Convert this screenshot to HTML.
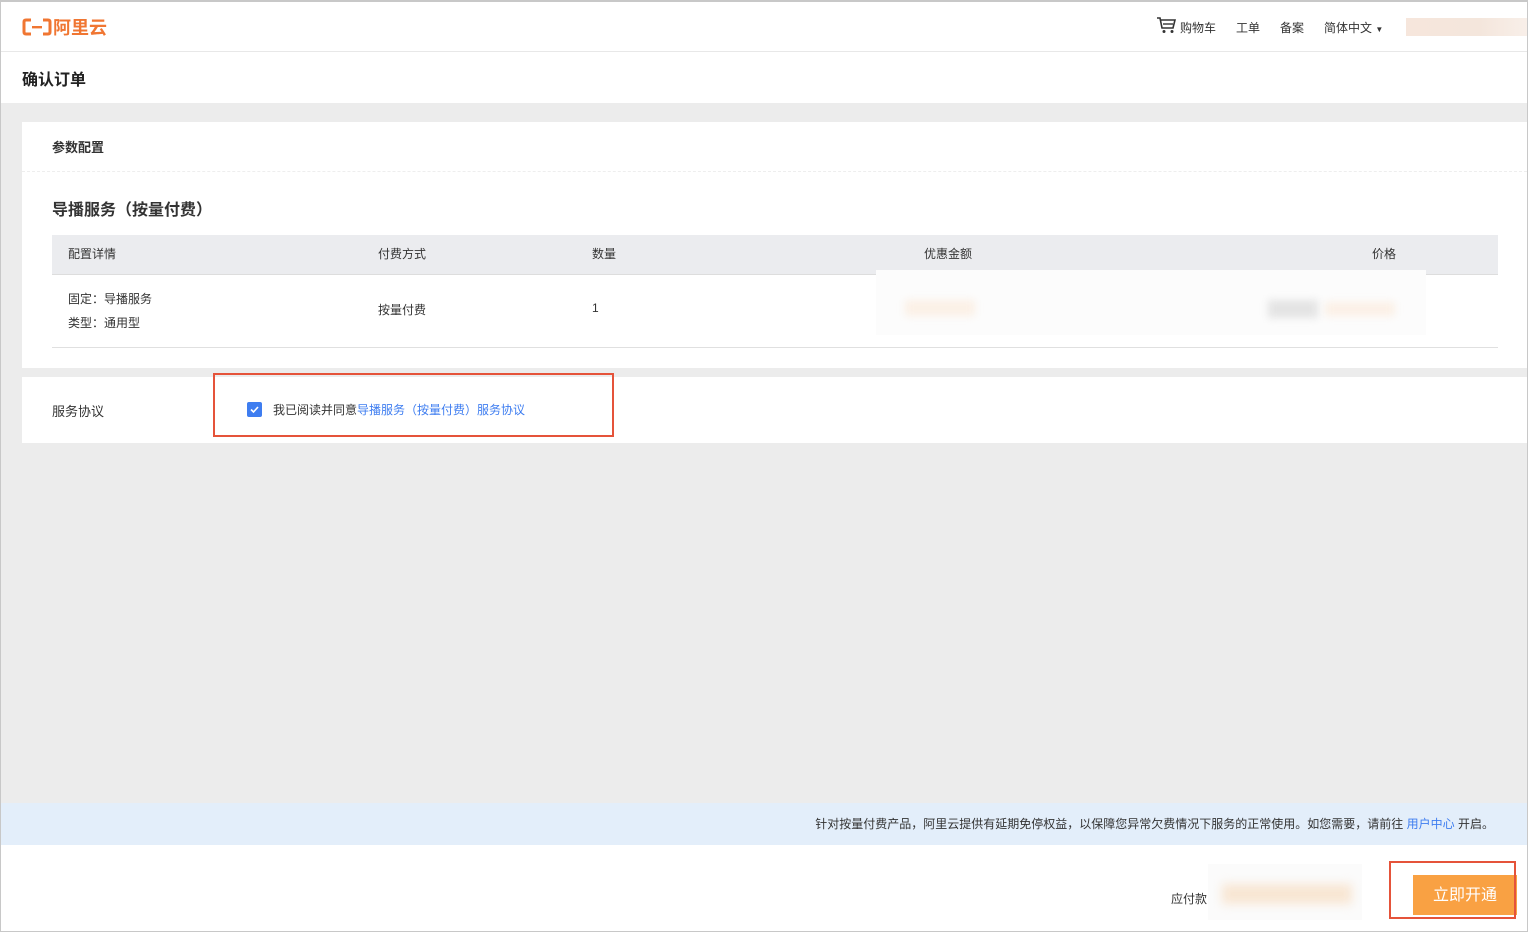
<!DOCTYPE html>
<html><head><meta charset="utf-8"><style>
*{margin:0;padding:0;box-sizing:border-box}
body{width:1528px;height:932px;overflow:hidden;background:#fff;font-family:"Liberation Sans","Noto Sans CJK SC",sans-serif;color:#333;position:relative}
.frame{position:absolute;left:0;top:0;width:1528px;height:932px;border:1px solid #c8c8c8;border-top:2px solid #c8c8c8;pointer-events:none}
.abs{position:absolute}
.top{left:0;top:0;width:1528px;height:52px;border-bottom:1px solid #e8e8e8;background:#fff}
.gray{left:1px;top:103px;width:1526px;height:700px;background:#ececec}
.card{background:#fff}
.t12{font-size:12px}
</style></head><body>
<div class="abs top"></div>
<div class="abs" style="left:22px;top:17px;color:#f07632;font-weight:bold;font-size:18px;line-height:22px">
<svg width="30" height="18" viewBox="0 0 30 18" style="vertical-align:-2px"><path d="M9 2H4Q2 2 2 4V14Q2 16 4 16H9" fill="none" stroke="#f07632" stroke-width="3"/><path d="M21 2H26Q28 2 28 4V14Q28 16 26 16H21" fill="none" stroke="#f07632" stroke-width="3"/><rect x="10" y="8" width="10" height="2.4" fill="#f07632"/></svg><span style="margin-left:1px">阿里云</span></div>
<svg class="abs" style="left:1156px;top:16px" width="20" height="18" viewBox="0 0 20 18"><path d="M1 2H4L6 12H17L19 4H5" fill="none" stroke="#333" stroke-width="1.6"/><path d="M7 8H17" stroke="#333" stroke-width="1.4"/><circle cx="8" cy="15.5" r="1.5" fill="#333"/><circle cx="16" cy="15.5" r="1.5" fill="#333"/></svg>
<div class="abs t12" style="left:1180px;top:19px">购物车</div>
<div class="abs t12" style="left:1236px;top:19px">工单</div>
<div class="abs t12" style="left:1280px;top:19px">备案</div>
<div class="abs t12" style="left:1324px;top:19px">简体中文 <span style="font-size:8px">▼</span></div>
<div class="abs" style="left:1406px;top:18px;width:122px;height:18px;background:linear-gradient(90deg,#f6e6dc,#f4e6dc 60%,#f8efe9)"></div>
<div class="abs" style="left:22px;top:66px;font-size:16px;font-weight:bold;color:#222">确认订单</div>
<div class="abs gray"></div>
<div class="abs card" style="left:22px;top:122px;width:1505px;height:246px"></div>
<div class="abs" style="left:22px;top:171px;width:1505px;border-top:1px dashed #eee"></div>
<div class="abs" style="left:52px;top:137px;font-size:13px;font-weight:bold;color:#333">参数配置</div>
<div class="abs" style="left:52px;top:196px;font-size:16px;font-weight:bold;color:#333">导播服务（按量付费）</div>
<div class="abs" style="left:52px;top:235px;width:1446px;height:40px;background:#ebecef;border-bottom:1px solid #ddd"></div>
<div class="abs t12" style="left:68px;top:245px">配置详情</div>
<div class="abs t12" style="left:378px;top:245px">付费方式</div>
<div class="abs t12" style="left:592px;top:245px">数量</div>
<div class="abs t12" style="left:924px;top:245px">优惠金额</div>
<div class="abs t12" style="left:1372px;top:245px">价格</div>
<div class="abs" style="left:52px;top:347px;width:1446px;border-top:1px solid #e0e0e0"></div>
<div class="abs t12" style="left:68px;top:290px">固定：导播服务</div>
<div class="abs t12" style="left:68px;top:314px">类型：通用型</div>
<div class="abs t12" style="left:378px;top:301px">按量付费</div>
<div class="abs t12" style="left:592px;top:301px">1</div>
<div class="abs" style="left:876px;top:270px;width:550px;height:65px;background:#fcfcfc"></div>
<div class="abs" style="left:905px;top:300px;width:70px;height:16px;background:#fbf0e6;filter:blur(4px)"></div>
<div class="abs" style="left:1268px;top:300px;width:50px;height:18px;background:#e4e4e4;filter:blur(4px)"></div>
<div class="abs" style="left:1325px;top:302px;width:70px;height:14px;background:#fbf0e6;filter:blur(4px)"></div>
<div class="abs card" style="left:22px;top:377px;width:1505px;height:66px"></div>
<div class="abs" style="left:52px;top:401px;font-size:13px">服务协议</div>
<div class="abs" style="left:213px;top:373px;width:401px;height:64px;border:2px solid #e5533a"></div>
<div class="abs" style="left:247px;top:402px;width:15px;height:15px;background:#3e7df0;border-radius:2px"><svg width="15" height="15"><path d="M4 7.5L6.5 10L11 5" fill="none" stroke="#fff" stroke-width="1.6"/></svg></div>
<div class="abs t12" style="left:273px;top:401px">我已阅读并同意<span style="color:#3e7df0">导播服务（按量付费）服务协议</span></div>
<div class="abs" style="left:1px;top:803px;width:1526px;height:42px;background:#e3eefa"></div>
<div class="abs t12" style="right:34px;top:815px;color:#333">针对按量付费产品，阿里云提供有延期免停权益，以保障您异常欠费情况下服务的正常使用。如您需要，请前往 <span style="color:#3e7df0">用户中心</span> 开启。</div>
<div class="abs t12" style="left:1171px;top:890px">应付款</div>
<div class="abs" style="left:1208px;top:864px;width:154px;height:56px;background:#fbfbfb"></div>
<div class="abs" style="left:1222px;top:884px;width:130px;height:20px;background:#f8e6d3;filter:blur(5px)"></div>
<div class="abs" style="left:1413px;top:875px;width:104px;height:40px;background:#f9a143;color:#fff;font-size:16px;text-align:center;line-height:42px">立即开通</div>
<div class="abs" style="left:1389px;top:861px;width:127px;height:58px;border:2px solid #e5533a"></div>
<div class="frame"></div>
</body></html>
